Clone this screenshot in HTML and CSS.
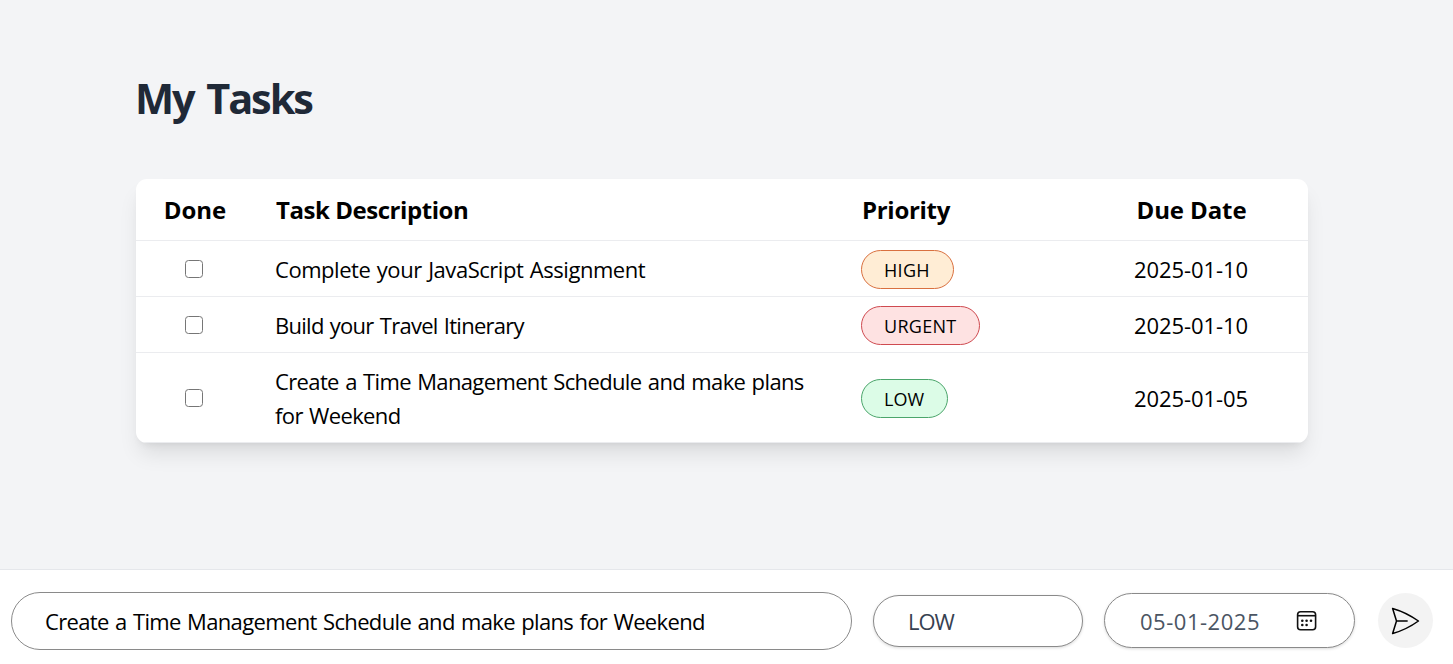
FILE: index.html
```html
<!DOCTYPE html>
<html lang="en">
<head>
<meta charset="utf-8">
<title>My Tasks</title>
<link rel="stylesheet" href="styles.css">
</head>
<body>
<main class="main">
  <h1 class="title"><span>My Tasks</span></h1>
  <section class="card">
    <div class="row row-head">
      <div class="cell center"><span class="th-done">Done</span></div>
      <div class="cell"><span class="th-desc">Task Description</span></div>
      <div class="cell"><span class="th-prio">Priority</span></div>
      <div class="cell center"><span class="th-date">Due Date</span></div>
    </div>
    <div class="row">
      <div class="cell center"><input class="check" type="checkbox" aria-label="Done"></div>
      <div class="cell"><span class="t1">Complete your JavaScript Assignment</span></div>
      <div class="cell"><span class="badge high">HIGH</span></div>
      <div class="cell center"><span class="date">2025-01-10</span></div>
    </div>
    <div class="row">
      <div class="cell center"><input class="check" type="checkbox" aria-label="Done"></div>
      <div class="cell"><span class="t2">Build your Travel Itinerary</span></div>
      <div class="cell"><span class="badge urgent">URGENT</span></div>
      <div class="cell center"><span class="date">2025-01-10</span></div>
    </div>
    <div class="row row-tall">
      <div class="cell center"><input class="check" type="checkbox" aria-label="Done"></div>
      <div class="cell"><span class="t3">Create a Time Management Schedule and make plans<br>for Weekend</span></div>
      <div class="cell"><span class="badge low">LOW</span></div>
      <div class="cell center"><span class="date">2025-01-05</span></div>
    </div>
  </section>
</main>
<footer class="bar">
  <div class="field task-field"><span>Create a Time Management Schedule and make plans for Weekend</span></div>
  <div class="field prio-field"><span>LOW</span></div>
  <div class="field date-field">
    <span>05-01-2025</span>
    <svg width="22" height="22" viewBox="0 0 22 22" fill="none" stroke="#111" stroke-width="1.6">
      <rect x="1.6" y="1.8" width="18" height="18" rx="3"/>
      <path d="M1.6 5.7h18"/>
      <g fill="#111" stroke="none"><circle cx="6.3" cy="10.8" r="1.3"/><circle cx="10.6" cy="10.8" r="1.3"/><circle cx="15" cy="10.8" r="1.3"/><circle cx="6.3" cy="15" r="1.3"/><circle cx="10.6" cy="15" r="1.3"/></g>
    </svg>
  </div>
  <button class="send" aria-label="Add task">
    <svg width="34" height="34" viewBox="0 0 24 24" fill="none" stroke="#000" stroke-width="1.06" stroke-linecap="round" stroke-linejoin="round">
      <path d="M6 12 3.269 3.125A59.769 59.769 0 0 1 21.485 12 59.768 59.768 0 0 1 3.27 20.875L5.999 12Zm0 0h7.5"/>
    </svg>
  </button>
</footer>
</body>
</html>
```
FILE: styles.css
```css
* { box-sizing: border-box; }
body {
  margin: 0;
  height: 664px;
  display: flex;
  flex-direction: column;
  background: #f3f4f6;
  color: #000;
  font-family: "Open Sans", "Noto Sans", sans-serif;
  font-size: 22px;
  overflow: hidden;
}
span { white-space: nowrap; }
.main { flex: 1; padding: 69px 145px 0 136px; }
.title { margin: 0 0 50px; height: 60px; line-height: 59px; font-size: 41.5px; font-weight: 700; letter-spacing: -2.1px; word-spacing: 4px; text-indent: -1px; color: #1f2937; }
.card {
  height: 264px;
  background: #fff;
  border-radius: 11px;
  overflow: hidden;
  box-shadow: 0 14px 21px -4px rgba(0,0,0,.1), 0 5px 8px -5px rgba(0,0,0,.1);
}
.row {
  display: grid;
  grid-template-columns: 116px 586px 235px 235px;
  height: 56px;
  border-bottom: 1px solid #ebecef;
}
.row-head { height: 62px; font-weight: 700; font-size: 24px; }
.row-head .cell { padding: 0 22px 0 24px; }
.row-tall { height: 90px; }
.cell { display: flex; align-items: center; padding: 1px 23px 0; line-height: 34px; }
.center { justify-content: center; }
.th-desc { letter-spacing: -.45px; }
.th-prio { letter-spacing: -.3px; }
.th-date { letter-spacing: -.1px; }
.t1 { letter-spacing: -.46px; word-spacing: 1.2px; }
.t2 { letter-spacing: -.73px; word-spacing: 1.2px; }
.t3 { letter-spacing: -.63px; word-spacing: 1.2px; }
.date { letter-spacing: -.1px; padding-left: 1px; }
.check { appearance: none; width: 18px; height: 18px; margin: 0 0 1px; border: 1.5px solid #767676; border-radius: 3.5px; background: #fff; }
.badge { display: block; height: 39px; padding: 1px 22px 0; line-height: 36px; border: 1px solid; border-radius: 20px; font-size: 18px; color: #000; }
.high { width: 93px; background: #ffedd5; border-color: #d9703f; letter-spacing: .3px; }
.urgent { width: 119px; background: #fee2e2; border-color: #cf4a50; letter-spacing: .3px; }
.low { width: 87px; background: #dcfce7; border-color: #4ba56b; }
.bar {
  height: 95px;
  display: flex;
  align-items: center;
  padding: 7px 20px 0 11px;
  background: #fff;
  border-top: 1px solid #e5e7eb;
}
.field { display: flex; align-items: center; border: 1px solid #8a8a8a; border-radius: 29px; background: #fff; }
.task-field { width: 841px; height: 58px; padding: 0 33px; margin-right: 21px; letter-spacing: -.64px; word-spacing: 1.2px; }
.prio-field { width: 210px; height: 52px; padding: 1px 34px 0; margin-right: 21px; color: #374151; letter-spacing: -1px; box-shadow: 0 1px 3px rgba(0,0,0,.15); }
.date-field { width: 251px; height: 55px; padding: 0 36px 0 35px; margin-right: 23px; justify-content: space-between; color: #4b5563; letter-spacing: .52px; box-shadow: 0 1px 3px rgba(0,0,0,.15); }
.send { width: 55px; height: 55px; padding: 0 2px 0 0; border: 0; border-radius: 50%; background: #f3f3f3; display: flex; align-items: center; justify-content: center; }
```
